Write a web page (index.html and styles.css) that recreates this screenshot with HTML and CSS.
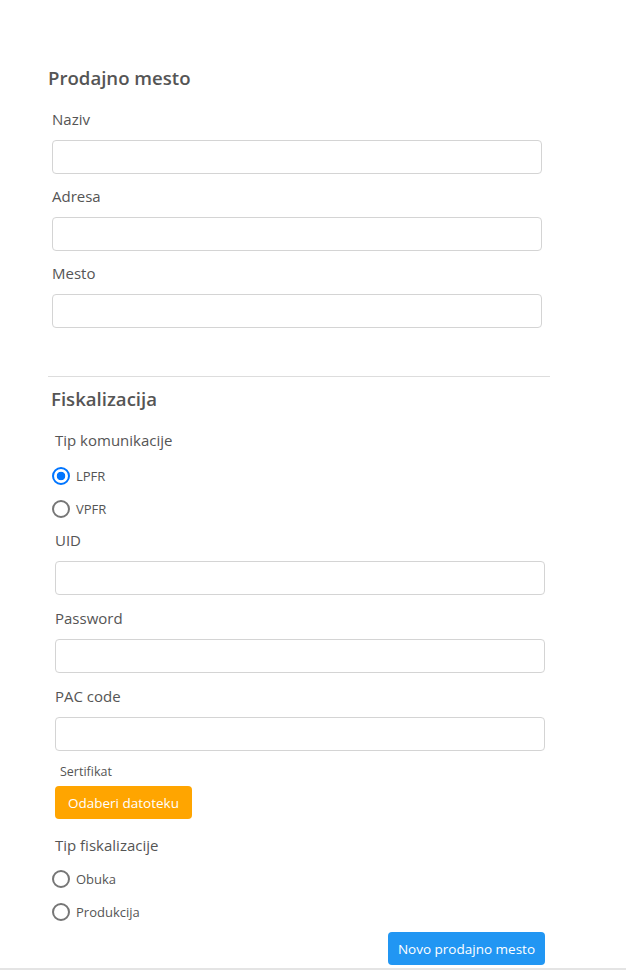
FILE: index.html
```html
<!DOCTYPE html>
<html lang="sr">
<head>
<meta charset="UTF-8">
<meta name="viewport" content="width=device-width, initial-scale=1.0">
<title>Prodajno mesto</title>
<link rel="stylesheet" href="styles.css">
</head>
<body>

<div class="page">
  <div class="form-wrap">
    <h2 class="title">Prodajno mesto</h2>
    <div class="fields">
      <div class="field">
        <label>Naziv</label>
        <input type="text">
      </div>
      <div class="field">
        <label>Adresa</label>
        <input type="text">
      </div>
      <div class="field">
        <label>Mesto</label>
        <input type="text">
      </div>
    </div>

    <hr class="divider">

    <div class="fiscal">
      <h2 class="title">Fiskalizacija</h2>
      <div class="fields">
        <div class="group-label">Tip komunikacije</div>
        <div class="radios">
          <label class="radio"><input type="radio" name="tip" checked> LPFR</label>
          <label class="radio"><input type="radio" name="tip"> VPFR</label>
        </div>
        <div class="field">
          <label>UID</label>
          <input type="text">
        </div>
        <div class="field">
          <label>Password</label>
          <input type="password">
        </div>
        <div class="field">
          <label>PAC code</label>
          <input type="text">
        </div>
        <div class="small-label">Sertifikat</div>
        <button class="btn btn-orange" type="button">Odaberi datoteku</button>
        <div class="group-label second">Tip fiskalizacije</div>
        <div class="radios">
          <label class="radio"><input type="radio" name="mod"> Obuka</label>
          <label class="radio"><input type="radio" name="mod"> Produkcija</label>
        </div>
        <div class="actions">
          <button class="btn btn-blue" type="button">Novo prodajno mesto</button>
        </div>
      </div>
    </div>
  </div>
</div>

</body>
</html>
```

FILE: styles.css
```css
body {
  margin: 0;
  font-family: "Open Sans", Lato, sans-serif;
  color: #555;
  background-color: #fff;
}
.page {
  min-height: 970px;
  border-bottom: 2px solid #e4e4e4;
  box-sizing: border-box;
  padding-top: 66px;
}
.form-wrap {
  width: 502px;
  margin-left: 48px;
}
.title {
  margin: 0;
  font-size: 18.6px;
  line-height: 24px;
  font-weight: 600;
  color: #555;
}
.fields {
  padding-left: 4px;
  width: 490px;
  padding-top: 18px;
}
.field {
  margin-bottom: 11px;
}
.fiscal .field {
  margin-bottom: 12px;
}
.field label,
.group-label {
  display: block;
  font-size: 15px;
  line-height: 22px;
  margin-bottom: 10px;
}
.group-label {
  margin-bottom: 8px;
}
.group-label.second {
  margin-top: 15px;
  margin-bottom: 6px;
}
.field input {
  display: block;
  width: 100%;
  height: 34px;
  box-sizing: border-box;
  border: 1px solid #d4d4d4;
  border-radius: 4px;
  padding: 6px 10px;
  font-size: 15px;
  font-family: inherit;
}
.divider {
  border: none;
  border-top: 1px solid #ddd;
  margin: 48px 0 10px;
}
.fiscal {
  padding-left: 3px;
}
.radios {
  margin-left: -3px;
  margin-bottom: 4px;
}
.radio {
  display: flex;
  align-items: center;
  gap: 6px;
  height: 33px;
  font-size: 13px;
  color: #555;
}
.radio input {
  appearance: none;
  margin: 0;
  width: 18px;
  height: 18px;
  border: 2px solid #767676;
  border-radius: 50%;
  box-sizing: border-box;
  background: #fff;
}
.radio input:checked {
  border-color: #0075ff;
  background: radial-gradient(circle, #0075ff 0 4px, #fff 4.6px);
}
.small-label {
  font-size: 12.5px;
  line-height: 18px;
  margin: 2px 0 5px 5px;
}
.btn {
  border: none;
  border-radius: 4px;
  color: #fff;
  font-family: inherit;
  font-size: 13.5px;
  height: 33px;
  padding: 0 10px;
  cursor: pointer;
}
.btn-orange {
  background-color: #ffa500;
  padding: 0 13px;
}
.btn-blue {
  background-color: #2196f3;
}
.actions {
  display: flex;
  justify-content: flex-end;
}
```
